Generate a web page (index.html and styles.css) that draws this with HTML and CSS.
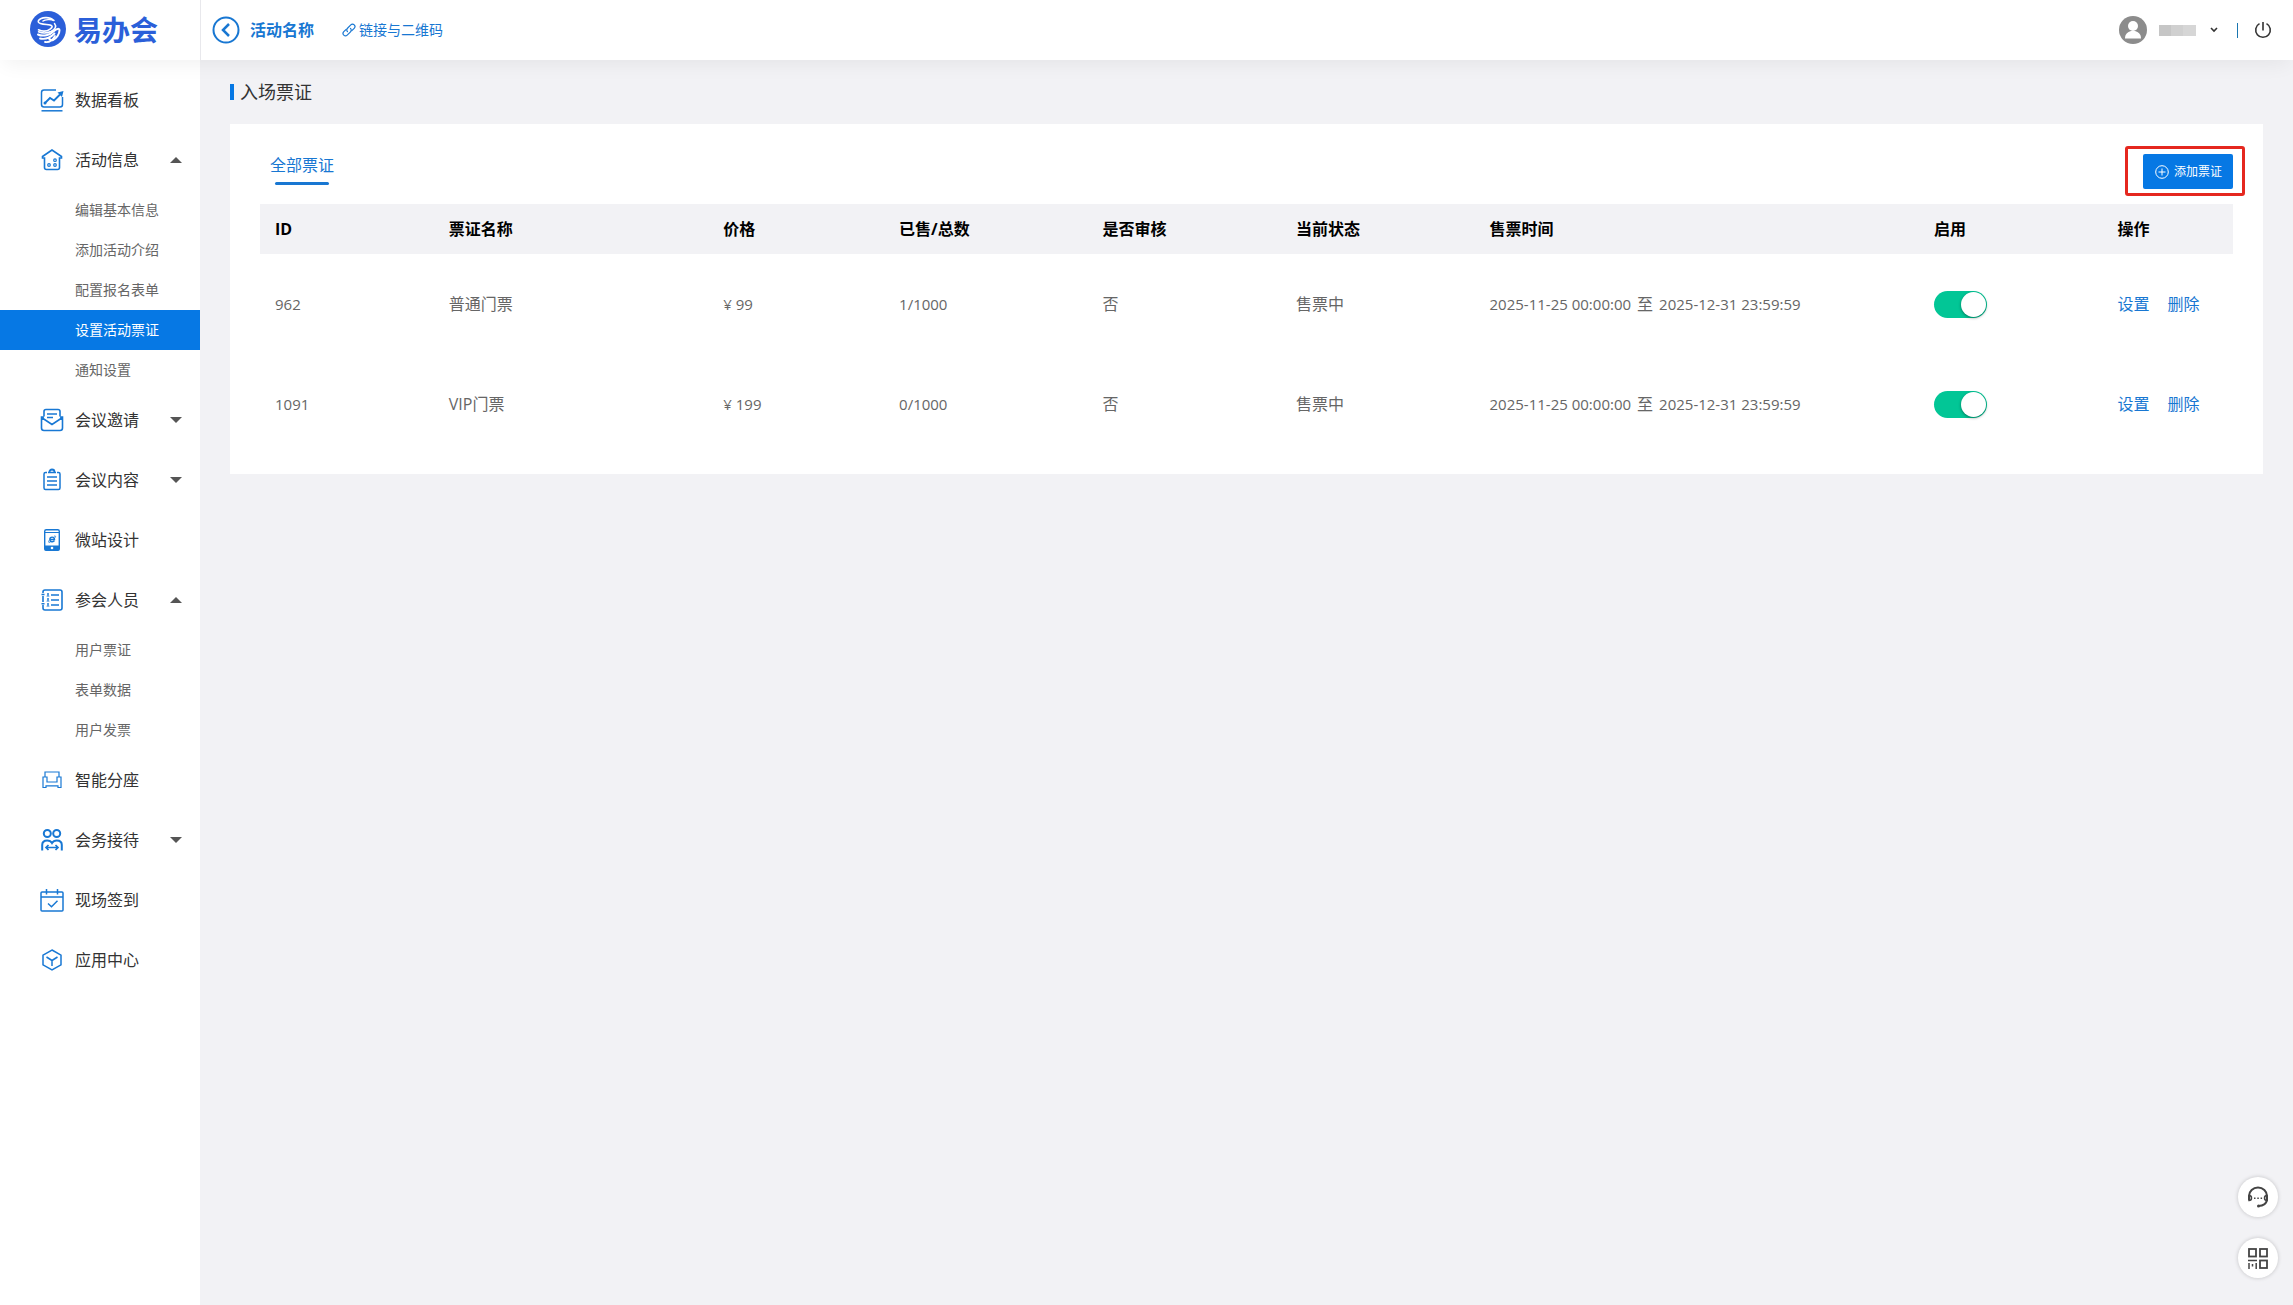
FILE: index.html
```html
<!DOCTYPE html>
<html lang="zh-CN">
<head>
    <meta charset="UTF-8">
    <meta name="viewport" content="width=device-width, initial-scale=1.0">
    <title>易办会 - 设置活动票证</title>
    <link rel="stylesheet" href="styles.css">
</head>
<body>
    <!-- 顶部栏 -->
    <header class="header">
        <a class="logo" href="#">
            <svg width="36" height="36" viewBox="0 0 36 36" fill="none">
                <circle cx="18" cy="18" r="18" fill="#2b5fd9"/>
                <g stroke="#fff" stroke-linecap="round" stroke-linejoin="round">
                    <path stroke-width="1.6" d="M23 9C20 5.500 11 6 8.500 9.500c-1.500 3 4 3.800 8 4 6 .3 7 2 4 4.300-4 3-9 2.500-12 1"/>
                    <path stroke-width="1.500" d="M24 9.500c-3-1.500-9-1-11 .5M24.500 12.500c2.500 3 .5 6-3.500 8-4.500 2-9 1.800-12.500.3"/>
                    <path stroke-width="2" d="M8 23.500c5 2.500 12 .5 16-3.500 2.500-2.300 5.500-3 5.500-.8 0 4-3 8.300-6.500 9.800-1.500.5-3-.3-4-1.500"/>
                    <path stroke-width="1.800" d="M10 27.500c6 1.300 10-.5 14.500-5M15 31c4 .8 7.500-1.500 10-6"/>
                </g>
            </svg>
            <span class="logo-text">易办会</span>
        </a>
        <div class="header-main">
            <button class="back" type="button" aria-label="返回">
                <svg width="28" height="28" viewBox="0 0 28 28" fill="none" stroke="currentColor">
                    <circle cx="14" cy="14" r="12.500" stroke-width="2"/>
                    <path d="M17 8l-6 6 6 6" stroke-width="2.500"/>
                </svg>
            </button>
            <a class="event-name" href="#">活动名称</a>
            <a class="qr-link" href="#">
                <svg width="14" height="14" viewBox="0 0 14 14" fill="none" stroke="currentColor" stroke-width="1.200" stroke-linecap="round">
                    <path d="M5.500 8.600a2.400 2.400 0 0 1 0-3.400l3.300-3.300a2.400 2.400 0 0 1 3.400 3.400L9.800 7.700"/>
                    <path d="M8.500 5.400a2.400 2.400 0 0 1 0 3.400l-3.300 3.300a2.400 2.400 0 0 1-3.400-3.400l2.400-2.400"/>
                </svg>
                链接与二维码
            </a>
            <div class="user">
                <button class="user-menu" type="button" aria-label="用户菜单">
                    <svg width="28" height="28" viewBox="0 0 28 28">
                        <circle cx="14" cy="14" r="14" fill="#8c8c8c"/>
                        <circle cx="14" cy="10" r="5" fill="#fff"/>
                        <path d="M6 22.500c0-4.500 2.500-6.500 6-7.500h4c3.500 1 6 3 6 7.500z" fill="#fff"/>
                    </svg>
                    <span class="user-name"></span>
                    <svg class="chevron" width="8" height="6" viewBox="0 0 8 6" fill="none" stroke="#333" stroke-width="1.600">
                        <path d="M1 1l3 3 3-3"/>
                    </svg>
                </button>
                <span class="divider"></span>
                <button class="power" type="button" aria-label="退出">
                    <svg width="18" height="18" viewBox="0 0 18 18" fill="none" stroke="#333" stroke-width="1.600">
                        <path d="M5.500 2.600a7.300 7.300 0 1 0 7 0M9 1v8.500"/>
                    </svg>
                </button>
            </div>
        </div>
    </header>

    <div class="layout">
        <!-- 左侧菜单 -->
        <nav class="sidebar">
            <a class="menu-item" href="#">
                <svg class="icon" viewBox="0 0 24 24">
                    <path d="M16 2H4Q1.500 2 1.500 4.500v12Q1.500 19 4 19h16q2.500 0 2.500-2.500V9" stroke-width="1.500"/>
                    <path d="M1.500 22.800h21" stroke-width="1.500"/>
                    <path d="M5 15l5-5 4 2.500 6-6" stroke-width="1.800"/>
                    <path d="M17.500 4.500L23.500 3l-1.500 6z" fill="currentColor" stroke="none"/>
                    <circle cx="5" cy="15" r="1.500" fill="currentColor" stroke="none"/>
                </svg>
                数据看板
            </a>
            <button class="menu-item open" type="button" aria-expanded="true">
                <svg class="icon" viewBox="0 0 24 24">
                    <path d="M12 2L2.500 8.500V10H4.500v9.500q0 2 2 2h11q2 0 2-2V10h2V8.500z" stroke-width="1.600"/>
                    <g stroke-width="1.200"><circle cx="9" cy="17" r="1.300"/><circle cx="15" cy="17" r="1.300"/><circle cx="15" cy="12.200" r="1.300"/></g>
                </svg>
                活动信息
            </button>
            <div class="submenu">
                <a href="#">编辑基本信息</a>
                <a href="#">添加活动介绍</a>
                <a href="#">配置报名表单</a>
                <a class="active" href="#">设置活动票证</a>
                <a href="#">通知设置</a>
            </div>
            <button class="menu-item closed" type="button" aria-expanded="false">
                <svg class="icon" viewBox="0 0 24 24">
                    <path d="M4 8.500v-5Q4 1.500 6 1.500h12q2 0 2 2v5" stroke-width="1.600"/>
                    <path d="M4 9H1.500v11q0 2.500 2.500 2.500h16q2.500 0 2.500-2.500V9H20M1.500 9.500l10.500 7 10.500-7" stroke-width="1.600"/>
                    <path d="M7 6h10M7 9.500h6" stroke-width="1.500"/>
                </svg>
                会议邀请
            </button>
            <button class="menu-item closed" type="button" aria-expanded="false">
                <svg class="icon" viewBox="0 0 24 24">
                    <path d="M7 4.500H5.500Q4 4.500 4 6v14q0 1.500 1.500 1.500h13q1.500 0 1.500-1.500V6q0-1.500-1.500-1.500H17M8 4.500h8" stroke-width="1.500"/>
                    <path d="M9.500 4a2.500 2.500 0 0 1 5 0" stroke-width="1.800"/>
                    <path d="M7 9h10M7 13h10M7 17h10" stroke-width="1.500"/>
                </svg>
                会议内容
            </button>
            <a class="menu-item" href="#">
                <svg class="icon" viewBox="0 0 24 24">
                    <rect x="4.700" y="1.700" width="14.600" height="20.600" rx="1.500" stroke-width="1.400"/>
                    <path d="M5 4.500h14" stroke-width="1"/>
                    <path d="M4.500 17.500h15v3.500q0 1.500-1.500 1.500H6q-1.500 0-1.500-1.500z" fill="currentColor" stroke="none"/>
                    <circle cx="12" cy="20" r="1.300" fill="#fff" stroke="none"/>
                    <path d="M9.800 11.500h4.700c0-3.200-4.700-3.200-4.700 0 0 2.800 3.700 2.800 4.600 1.200" stroke-width="1.400"/>
                    <path d="M14 8.200c2-.8 1.800.6 1.300 1.400M9.200 12.200c-1.300 2.300-.2 2.700 1 2" stroke-width=".8"/>
                </svg>
                微站设计
            </a>
            <button class="menu-item open" type="button" aria-expanded="true">
                <svg class="icon" viewBox="0 0 24 24">
                    <path d="M3 5V4q0-2 2-2h15q2 0 2 2v16q0 2-2 2H5q-2 0-2-2v-3M3 8v6" stroke-width="1.600"/>
                    <path d="M1.500 6.500h3M1.500 15.700h3M11 7h8M11 12h8M11 17h8" stroke-width="1.500"/>
                    <path d="M6.500 8.500c0-1.800 3-1.800 3 0zM6.500 13.500c0-1.800 3-1.800 3 0zM6.500 18.500c0-1.800 3-1.800 3 0z" fill="currentColor" stroke="none"/>
                    <g fill="currentColor" stroke="none"><circle cx="8" cy="6" r="1"/><circle cx="8" cy="11" r="1"/><circle cx="8" cy="16" r="1"/></g>
                </svg>
                参会人员
            </button>
            <div class="submenu">
                <a href="#">用户票证</a>
                <a href="#">表单数据</a>
                <a href="#">用户发票</a>
            </div>
            <a class="menu-item" href="#">
                <svg class="icon" viewBox="0 0 24 24" stroke-width="1.200">
                    <path d="M5 8.500V4h14v4.500M7 14V9H3v10.500h3v-1.700h12v1.700h3V9h-4v5z"/>
                </svg>
                智能分座
            </a>
            <button class="menu-item closed" type="button" aria-expanded="false">
                <svg class="icon" viewBox="0 0 24 24" stroke-width="2">
                    <circle cx="7.300" cy="5.500" r="3.500"/>
                    <circle cx="16.700" cy="5.500" r="3.500"/>
                    <path d="M2.200 22.500V17q0-4.500 5-4.500 3.300 0 4.800 2.500 1.500-2.500 4.800-2.500 5 0 5 4.500v5.500"/>
                    <path d="M6 19.500h12M8.500 17L6 19.500 8.500 22M15.500 17l2.500 2.500-2.500 2.500" stroke-width="1.700"/>
                </svg>
                会务接待
            </button>
            <a class="menu-item" href="#">
                <svg class="icon" viewBox="0 0 24 24" stroke-width="1.500">
                    <rect x="1" y="4" width="22" height="19" rx="1"/>
                    <path d="M1 9h22M6.500 1v5.500M17.500 1v5.500M8 15.500l3.500 3.200 6-6"/>
                </svg>
                现场签到
            </a>
            <a class="menu-item" href="#">
                <svg class="icon" viewBox="0 0 24 24" stroke-width="1.500">
                    <path d="M12 2l9 5.200v9.600L12 22l-9-5.200V7.200z"/>
                    <path d="M6.500 9l5.500 3.500L17.500 9M12 12.500V18"/>
                </svg>
                应用中心
            </a>
        </nav>

        <!-- 票证列表 -->
        <main class="content">
            <h1 class="page-title">入场票证</h1>
            <section class="card">
                <div class="card-top">
                    <a class="tab" href="#">全部票证</a>
                    <div class="add-box">
                        <button class="add-btn" type="button">
                            <svg width="14" height="14" viewBox="0 0 14 14" fill="none" stroke="currentColor">
                                <circle cx="7" cy="7" r="6.300"/>
                                <path d="M7 3.500v7M3.500 7h7"/>
                            </svg>
                            添加票证
                        </button>
                    </div>
                </div>
                <table class="tickets">
                    <thead>
                        <tr>
                            <th class="col-id">ID</th>
                            <th class="col-name">票证名称</th>
                            <th class="col-price">价格</th>
                            <th class="col-sold">已售/总数</th>
                            <th class="col-state">是否审核</th>
                            <th class="col-state">当前状态</th>
                            <th class="col-time">售票时间</th>
                            <th class="col-switch">启用</th>
                            <th class="col-action">操作</th>
                        </tr>
                    </thead>
                    <tbody>
                        <tr>
                            <td class="num">962</td>
                            <td>普通门票</td>
                            <td class="num">¥ 99</td>
                            <td class="num">1/1000</td>
                            <td>否</td>
                            <td>售票中</td>
                            <td><div class="period"><span class="num">2025-11-25 00:00:00</span> 至 <span class="num">2025-12-31 23:59:59</span></div></td>
                            <td><input class="switch" type="checkbox" aria-label="启用普通门票" checked></td>
                            <td><div class="actions"><a href="#">设置</a><a href="#">删除</a></div></td>
                        </tr>
                        <tr>
                            <td class="num">1091</td>
                            <td>VIP门票</td>
                            <td class="num">¥ 199</td>
                            <td class="num">0/1000</td>
                            <td>否</td>
                            <td>售票中</td>
                            <td><div class="period"><span class="num">2025-11-25 00:00:00</span> 至 <span class="num">2025-12-31 23:59:59</span></div></td>
                            <td><input class="switch" type="checkbox" aria-label="启用VIP门票" checked></td>
                            <td><div class="actions"><a href="#">设置</a><a href="#">删除</a></div></td>
                        </tr>
                    </tbody>
                </table>
            </section>
        </main>
    </div>

    <!-- 右下角悬浮按钮 -->
    <div class="float-tools">
        <button type="button" aria-label="在线客服">
            <svg width="22" height="22" viewBox="0 0 22 22" fill="none" stroke="#444" stroke-width="2">
                <path d="M2 14V10a9 8.500 0 0 1 18 0v4q-1 5.500-8.500 6"/>
                <path d="M2 9.500q2.500 0 2.500 2.500T2 14.500zM20 9.500q-2.500 0-2.500 2.500t2.500 2.500z" stroke-width="1.500"/>
                <circle cx="11.500" cy="20" r="1.500" fill="#444" stroke="none"/>
                <path d="M7 12.300h1.500M10.300 12.300h1.500M13.600 12.300h1.500" stroke-width="1.500"/>
            </svg>
        </button>
        <button type="button" aria-label="二维码">
            <svg width="22" height="22" viewBox="0 0 22 22" fill="none" stroke="#444" stroke-width="1.800">
                <rect x="2" y="2" width="7" height="7.500"/>
                <rect x="13" y="2" width="7" height="7.500"/>
                <rect x="13" y="13.500" width="7" height="7.500"/>
                <path d="M1 13.500h9M2 16v6M5.500 17v2.500M9.200 16v6" stroke-width="1.500"/>
            </svg>
        </button>
    </div>
</body>
</html>
```
FILE: styles.css
```css
* {
    box-sizing: border-box;
}

body {
    margin: 0;
    min-height: 100vh;
    display: flex;
    flex-direction: column;
    background: #f2f2f5;
    color: #333;
    font-family: "Open Sans", "Noto Sans CJK SC", sans-serif;
    font-size: 16px;
    line-height: 24px;
}

a {
    color: inherit;
    text-decoration: none;
}

button {
    border: none;
    padding: 0;
    background: none;
    color: inherit;
    font: inherit;
    cursor: pointer;
}

svg {
    display: block;
    flex-shrink: 0;
}

/* 顶部栏 */
.header {
    display: flex;
    height: 60px;
    background: #fff;
    box-shadow: 0 8px 20px -4px rgba(0, 0, 0, 0.06);
    position: relative;
    z-index: 2;
}

.logo {
    width: 201px;
    padding: 0 0 2px 30px;
    display: flex;
    align-items: center;
    gap: 8px;
    border-right: 1px solid #e8e8ec;
    color: #2b5fd9;
}

.logo-text {
    font-family: "KaiTi", "STKaiti", "Noto Sans CJK SC", sans-serif;
    font-size: 28px;
    line-height: 36px;
    font-weight: bold;
}

.header-main {
    flex: 1;
    display: flex;
    align-items: center;
    padding: 0 21px 0 11px;
    color: #1877d2;
}

.event-name {
    margin-left: 10px;
    font-weight: bold;
}

.qr-link {
    display: flex;
    align-items: center;
    gap: 3px;
    margin-left: 28px;
    font-size: 14px;
}

.user {
    display: flex;
    align-items: center;
    margin-left: auto;
}

.user-menu {
    display: flex;
    align-items: center;
}

.user-name {
    width: 37px;
    height: 11px;
    margin: 0 14px 0 12px;
    background: linear-gradient(90deg, #c6c6c6 33%, #d0d0d0 33%, #d0d0d0 66%, #d6d6d6 66%);
}

.divider {
    width: 1px;
    height: 15px;
    margin: 0 16px 0 19px;
    background: #1a76b0;
}

/* 左侧菜单 */
.layout {
    flex: 1;
    display: flex;
}

.sidebar {
    width: 200px;
    padding-top: 10px;
    background: #fff;
}

.menu-item {
    display: flex;
    align-items: center;
    gap: 11px;
    width: 100%;
    height: 60px;
    padding: 0 18px 0 40px;
}

.icon {
    width: 24px;
    height: 24px;
    fill: none;
    stroke: currentColor;
    color: #1878d4;
}

.open::after,
.closed::after {
    content: "";
    margin-left: auto;
    border: 6px solid transparent;
}

.open::after {
    border-top: none;
    border-bottom-color: #555;
}

.closed::after {
    border-bottom: none;
    border-top-color: #555;
}

.submenu a {
    display: block;
    padding-left: 75px;
    color: #666;
    font-size: 14px;
    line-height: 40px;
}

.submenu .active {
    background: #0678e4;
    color: #fff;
}

/* 内容区 */
.content {
    flex: 1;
    padding: 20px 30px;
}

.page-title {
    display: flex;
    align-items: center;
    gap: 6px;
    margin: 0 0 20px;
    font-size: 18px;
    line-height: 24px;
    font-weight: normal;
}

.page-title::before {
    content: "";
    width: 4px;
    height: 16px;
    background: #0678e4;
}

.card {
    padding: 22px 30px 20px;
    background: #fff;
}

.card-top {
    display: flex;
    justify-content: space-between;
    align-items: flex-start;
    margin-bottom: 8px;
}

.tab {
    display: flex;
    flex-direction: column;
    align-items: center;
    gap: 5px;
    padding: 7px 10px 0;
    color: #1877d2;
}

.tab::after {
    content: "";
    width: 54px;
    height: 3px;
    border-radius: 2px;
    background: #1877d2;
}

.add-box {
    margin-right: -12px;
    padding: 5px 9px 4px 15px;
    border: 3px solid #e5281f;
    border-radius: 3px;
}

.add-btn {
    display: flex;
    align-items: center;
    gap: 5px;
    height: 35px;
    padding: 0 11px 0 12px;
    border-radius: 2px;
    background: #0678e4;
    color: #fff;
    font-size: 12px;
}

/* 表格 */
.tickets {
    width: 100%;
    table-layout: fixed;
    border-collapse: collapse;
    color: #666;
}

.tickets th,
.tickets td {
    padding: 0 15px;
    text-align: left;
}

.tickets th {
    height: 50px;
    background: #f2f2f5;
    color: #000;
}

.tickets td {
    height: 100px;
}

.tickets .num {
    font-size: 15px;
}

.period {
    display: flex;
    gap: 6px;
    white-space: nowrap;
}

.col-id { width: 8.8%; }
.col-name { width: 13.9%; }
.col-price { width: 8.9%; }
.col-sold { width: 10.3%; }
.col-state { width: 9.8%; }
.col-time { width: 22.5%; }
.col-switch { width: 9.3%; }
.col-action { width: 6.6%; }

.switch {
    appearance: none;
    display: flex;
    justify-content: flex-start;
    width: 53px;
    height: 27px;
    margin: 0;
    padding: 1px;
    border-radius: 14px;
    background: #ccc;
    cursor: pointer;
}

.switch::before {
    content: "";
    width: 25px;
    height: 25px;
    border-radius: 50%;
    background: #fff;
    box-shadow: 0 1px 3px rgba(0, 0, 0, 0.4);
}

.switch:checked {
    justify-content: flex-end;
    background: #02c696;
}

.actions {
    display: flex;
    gap: 18px;
    color: #1877d2;
    white-space: nowrap;
}

/* 悬浮按钮 */
.float-tools {
    position: fixed;
    right: 15px;
    bottom: 27px;
    display: flex;
    flex-direction: column;
    gap: 21px;
}

.float-tools button {
    display: flex;
    align-items: center;
    justify-content: center;
    width: 40px;
    height: 40px;
    border-radius: 50%;
    background: #fff;
    box-shadow: 0 0 4px rgba(0, 0, 0, 0.2);
}
```
